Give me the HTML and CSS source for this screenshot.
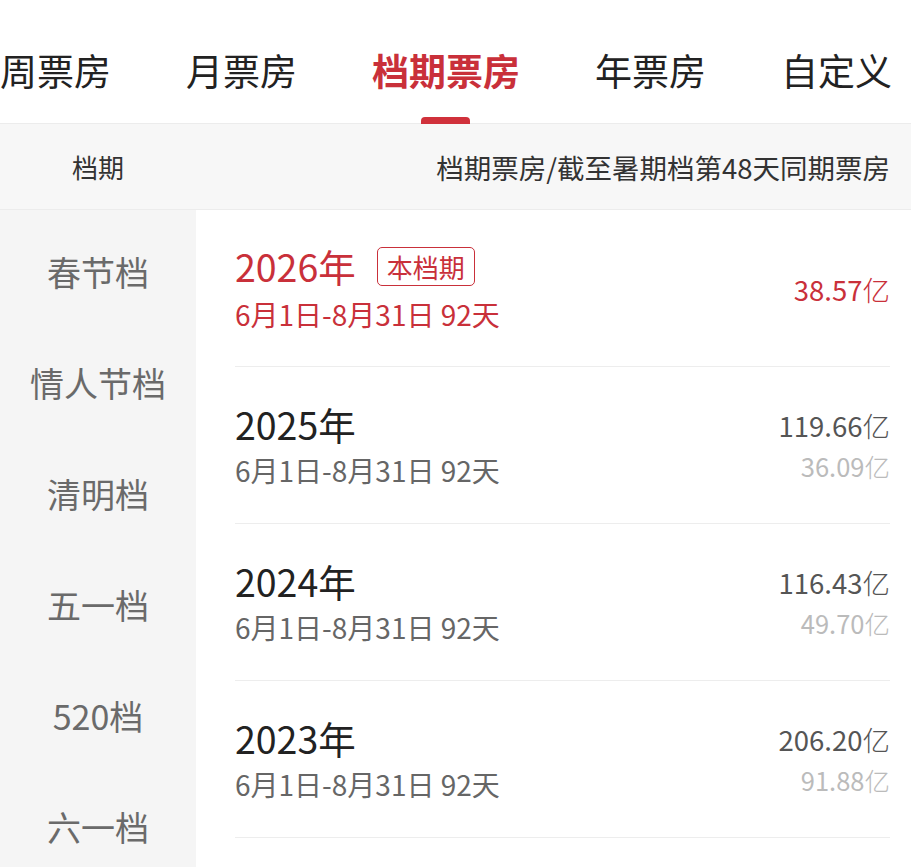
FILE: index.html
```html
<!DOCTYPE html>
<html lang="zh-CN">

<head>
    <meta charset="utf-8">
    <meta name="viewport" content="width=device-width, initial-scale=1.0">
    <title>档期票房</title>

    <link rel="stylesheet" href="styles.css">

</head>

<body>
    <nav class="tabs">
        <a class="tab">周票房</a>
        <a class="tab">月票房</a>
        <a class="tab valgt">档期票房</a>
        <a class="tab">年票房</a>
        <a class="tab">自定义</a>
    </nav>

    <div class="kolonner">
        <span class="kol_venstre">档期</span>
        <span class="kol_hoejre">档期票房/截至暑期档第48天同期票房</span>
    </div>

    <main class="indhold">
        <aside class="sidebar">
            <a class="side_punkt">春节档</a>
            <a class="side_punkt">情人节档</a>
            <a class="side_punkt">清明档</a>
            <a class="side_punkt">五一档</a>
            <a class="side_punkt">520档</a>
            <a class="side_punkt">六一档</a>
        </aside>

        <section class="liste">
            <article class="raekke aktuel">
                <div class="info">
                    <h2 class="aar">2026年 <span class="maerke">本档期</span></h2>
                    <p class="dato">6月1日-8月31日 92天</p>
                </div>
                <div class="tal">
                    <p class="total">38.57<span class="enhed">亿</span></p>
                </div>
            </article>

            <article class="raekke">
                <div class="info">
                    <h2 class="aar">2025年</h2>
                    <p class="dato">6月1日-8月31日 92天</p>
                </div>
                <div class="tal">
                    <p class="total">119.66<span class="enhed">亿</span></p>
                    <p class="samme">36.09<span class="enhed">亿</span></p>
                </div>
            </article>

            <article class="raekke">
                <div class="info">
                    <h2 class="aar">2024年</h2>
                    <p class="dato">6月1日-8月31日 92天</p>
                </div>
                <div class="tal">
                    <p class="total">116.43<span class="enhed">亿</span></p>
                    <p class="samme">49.70<span class="enhed">亿</span></p>
                </div>
            </article>

            <article class="raekke">
                <div class="info">
                    <h2 class="aar">2023年</h2>
                    <p class="dato">6月1日-8月31日 92天</p>
                </div>
                <div class="tal">
                    <p class="total">206.20<span class="enhed">亿</span></p>
                    <p class="samme">91.88<span class="enhed">亿</span></p>
                </div>
            </article>
        </section>
    </main>
</body>

</html>
```

FILE: styles.css
```css
body {
    font-family: "Noto Sans CJK SC", "Noto Sans", sans-serif;
    background-color: #fff;
    color: #222;
    margin: 0;
    overflow: hidden;
}

p,
h2 {
    margin: 0;
}

/* fanebjælke øverst */
.tabs {
    display: flex;
    gap: 75px;
    height: 123px;
    padding-left: 0;
    border-bottom: 1px solid #ececec;
    white-space: nowrap;
}

.tab {
    position: relative;
    font-size: 37px;
    line-height: 140px;
    height: 123px;
    color: #222;
    cursor: pointer;
}

.tab.valgt {
    color: #c9303a;
    font-weight: bold;
}

/* lille rød streg under valgt fane */
.tab.valgt::after {
    content: "";
    position: absolute;
    left: 50%;
    bottom: -1px;
    width: 49px;
    height: 7px;
    margin-left: -25px;
    border-radius: 4px 4px 0 0;
    background-color: #d0313b;
}

.kolonner {
    display: flex;
    justify-content: space-between;
    align-items: center;
    height: 85px;
    padding: 0 21px 0 72px;
    background-color: #f7f7f7;
    border-bottom: 1px solid #ececec;
    font-size: 27.5px;
    color: #333;
}

.kol_venstre {
    font-size: 26px;
}

.indhold {
    display: flex;
}

.sidebar {
    display: flex;
    flex-direction: column;
    width: 196px;
    flex-shrink: 0;
    padding-top: 6px;
    min-height: 660px;
    background-color: #f5f5f5;
}

.side_punkt {
    height: 111px;
    line-height: 111px;
    text-align: center;
    font-size: 34px;
    color: #6a6a6a;
    cursor: pointer;
}

.liste {
    flex: 1;
    padding: 0 21px 0 39px;
}

.raekke {
    display: flex;
    justify-content: space-between;
    align-items: center;
    height: 156px;
    border-bottom: 1px solid #ededed;
}

.aar {
    display: flex;
    align-items: center;
    gap: 21px;
    font-size: 37.5px;
    font-weight: normal;
    line-height: 46px;
    color: #222;
}

.dato {
    margin-top: 4px;
    font-size: 28px;
    line-height: 38px;
    color: #666;
}

.maerke {
    padding: 0 9px;
    height: 37px;
    line-height: 37px;
    font-size: 26px;
    border: 1px solid #c9303a;
    border-radius: 5px;
}

.tal {
    text-align: right;
}

.total {
    font-size: 27.5px;
    line-height: 42px;
    color: #555;
}

.samme {
    font-size: 25.5px;
    line-height: 40px;
    color: #bbb;
}

.enhed {
    font-weight: 300;
}

/* indeværende år står i rødt */
.aktuel .aar,
.aktuel .dato,
.aktuel .total {
    color: #c9303a;
}

.aktuel .dato {
    margin-top: 6px;
}

.aktuel .tal {
    margin-top: 2px;
}
```
